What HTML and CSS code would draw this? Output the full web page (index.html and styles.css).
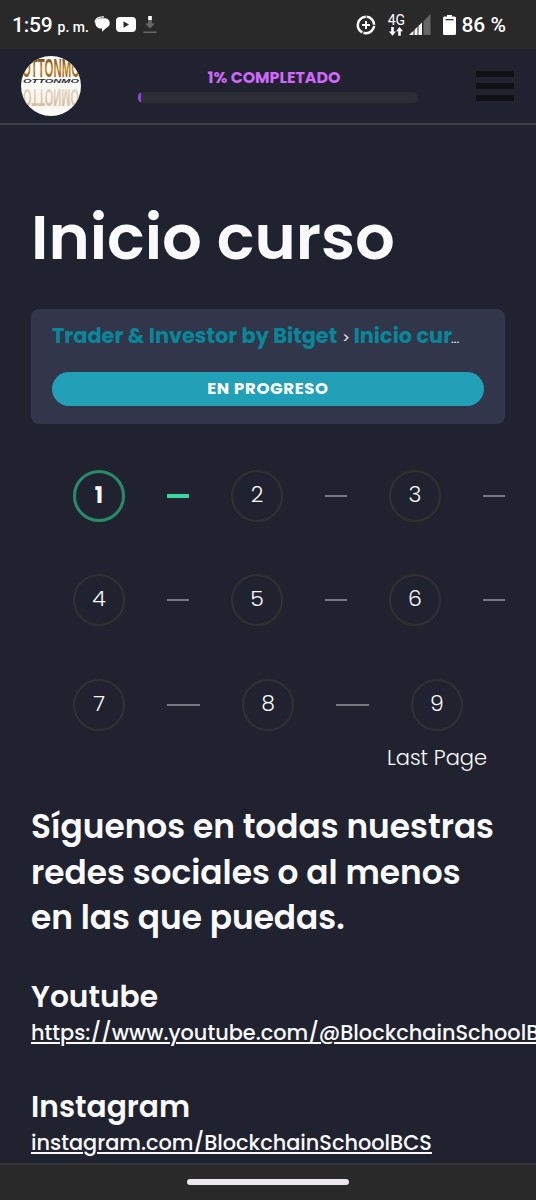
FILE: index.html
```html
<!DOCTYPE html>
<html lang="es">
<head>
<meta charset="utf-8">
<title>Inicio curso</title>
<link rel="stylesheet" href="styles.css">
</head>
<body>
<div class="statusbar">
  <span class="clock">1:59</span><span class="ampm">p. m.</span>
  <svg class="ic-chat" width="17" height="17" viewBox="0 0 17 17"><path d="M6 2.200h5.500a5 5 0 0 1 1 9.600l-4.500 4v-3.300H7a5 5 0 0 1-1-10.300z" fill="#fff"/><path d="M1 6.500C1.500 2 5 .7 10 .9" fill="none" stroke="#fff" stroke-width="1.300"/></svg>
  <svg class="ic-video" width="20" height="15" viewBox="0 0 20 15"><rect width="20" height="15" rx="4" fill="#fff"/><path d="M7.500 4.200v6.600l5.500-3.300z" fill="#292929"/></svg>
  <svg class="ic-down" width="14" height="19" viewBox="0 0 14 19"><path d="M5.200 5h3.600v3.500H12l-5 5-5-5h3.200z" fill="#666"/><rect x="5.200" y="1" width="3.600" height="4" fill="#fff"/><rect x=".5" y="16.500" width="13" height="1.600" fill="#666"/></svg>
  <span class="spacer"></span>
  <svg class="ic-data" width="20" height="20" viewBox="0 0 20 20"><circle cx="10" cy="10" r="8.200" fill="none" stroke="#fff" stroke-width="2.500" stroke-dasharray="11.900 1.200 14.500 1.200 21.500 1.200" transform="rotate(-86 10 10)"/><path d="M10 6v8M6 10h8" stroke="#fff" stroke-width="1.900"/></svg>
  <span class="net"><span class="net-label">4G</span>
    <svg width="14" height="9" viewBox="0 0 14 9"><path d="M2.200 0h2.600v4.500H7L3.500 8.800 0 4.500h2.200zM9.200 8.800h2.600V4.300H14L10.500 0 7 4.300h2.200z" fill="#fff"/></svg>
  </span>
  <svg class="ic-signal" width="22" height="22" viewBox="0 0 22 22"><path d="M14.500 7.200 21.500 0v21h-7z" fill="#666"/><path d="M0 21 13 8.500V21z" fill="#fff"/><path d="M5 14v8M9 10v12M13.500 7v15" stroke="#292929" stroke-width="1"/></svg>
  <svg class="ic-batt" width="13" height="20" viewBox="0 0 13 20"><path d="M4 0h5v1.500h2.500A1.500 1.500 0 0 1 13 3v15.500a1.500 1.500 0 0 1-1.500 1.500h-10A1.500 1.500 0 0 1 0 18.500V3a1.500 1.500 0 0 1 1.500-1.500H4z" fill="#fff"/><rect x="2.500" y="4" width="8" height="1.300" fill="#333"/></svg>
  <span class="pct">86 %</span>
</div>
<header class="topbar">
  <svg class="avatar" width="60" height="60" viewBox="0 0 60 60">
    <defs>
      <clipPath id="round"><circle cx="30" cy="30" r="30"/></clipPath>
      <linearGradient id="paper" x1="0" y1="0" x2="0" y2="1"><stop offset="0" stop-color="#fff"/><stop offset=".45" stop-color="#fdfbf7"/><stop offset=".8" stop-color="#f9f4ea"/><stop offset="1" stop-color="#fff"/></linearGradient>
      <linearGradient id="gold" x1="0" y1="0" x2="0" y2="1"><stop offset="0" stop-color="#5d3510"/><stop offset=".55" stop-color="#c98a2c"/><stop offset="1" stop-color="#7a4716"/></linearGradient>
      <linearGradient id="fade" x1="0" y1="0" x2="0" y2="1"><stop offset="0" stop-color="#cdb89f"/><stop offset="1" stop-color="#e6dccd"/></linearGradient>
    </defs>
    <g clip-path="url(#round)">
      <rect width="60" height="60" fill="url(#paper)"/>
      <text class="logo" transform="translate(1 21) scale(1 1.700)" textLength="58" lengthAdjust="spacingAndGlyphs" font-size="15" fill="url(#gold)">OTTONMO</text>
      <text class="logo slim" x="2" y="27" textLength="56" lengthAdjust="spacingAndGlyphs" font-size="6" fill="#2b2f33">OTTONMO</text>
      <text class="logo" transform="translate(2 33) scale(1 -1.750)" textLength="56" lengthAdjust="spacingAndGlyphs" font-size="14" fill="url(#fade)">OTTONMO</text>
    </g>
  </svg>
  <div class="progress">
    <div class="progress-label">1% COMPLETADO</div>
    <div class="track"><div class="fill" style="width:1%"></div></div>
  </div>
  <div class="burger"><i></i><i></i><i></i></div>
</header>
<main>
  <h1>Inicio curso</h1>
  <section class="card">
    <div class="crumbs"><a>Trader &amp; Investor by Bitget</a><span class="sep">&gt;</span><a>Inicio cur</a><span class="dots">...</span></div>
    <div class="status">EN PROGRESO</div>
  </section>
  <nav class="pager">
    <div class="row"><span class="dot on">1</span><i class="line on"></i><span class="dot">2</span><i class="line"></i><span class="dot">3</span><i class="line"></i></div>
    <div class="row"><span class="dot">4</span><i class="line"></i><span class="dot">5</span><i class="line"></i><span class="dot">6</span><i class="line"></i></div>
    <div class="row"><span class="dot">7</span><i class="line"></i><span class="dot">8</span><i class="line"></i><span class="dot">9</span></div>
    <div class="last">Last Page</div>
  </nav>
  <h2><span>Síguenos en todas nuestras</span><span>redes sociales o al menos</span><span>en las que puedas.</span></h2>
  <section class="social"><h3>Youtube</h3><a>https://www.youtube.com/@BlockchainSchoolBCS</a></section>
  <section class="social"><h3>Instagram</h3><a>instagram.com/BlockchainSchoolBCS</a></section>
</main>
<footer class="gesture"><div></div></footer>
</body>
</html>
```
FILE: styles.css
```css
* { box-sizing: border-box; }
body {
  margin: 0; width: 536px; height: 1200px; overflow: hidden;
  display: flex; flex-direction: column;
  background: #20232f; color: #fafafd;
  font-family: Poppins, Inter, "Open Sans", sans-serif;
  white-space: nowrap;
}
.statusbar {
  height: 49px; flex: none; background: #292929; color: #fff;
  display: flex; align-items: center; padding: 0 30px 0 12px;
  font-family: Roboto, sans-serif; font-weight: 500;
}
.clock { font-size: 21px; letter-spacing: -.2px; }
.ampm { font-size: 14px; margin: 5px 0 0 5px; }
.ic-chat { margin-left: 5px; }
.ic-video { margin-left: 5px; }
.ic-down { margin-left: 7px; }
.spacer { flex: 1; }
.net { display: flex; flex-direction: column; align-items: center; margin-left: 11px; width: 18px; }
.net-label { font-size: 14px; line-height: 13px; font-weight: 400; }
.ic-signal { margin-left: 4px; }
.ic-batt { margin-left: 12px; margin-top: 1px; }
.pct { font-size: 21px; margin-left: 5px; }
.topbar {
  height: 76px; flex: none; border-bottom: 2px solid #3b3e47;
  display: flex; padding: 7px 22px 0 21px; align-items: flex-start;
}
.avatar { flex: none; }
.logo { font-family: "Liberation Sans", sans-serif; font-weight: 700; }
.slim { font-style: italic; }
.progress { width: 280px; margin: 12px 0 0 57px; }
.progress-label { text-align: center; color: #cf68fb; font-size: 15.800px; line-height: 20px; font-weight: 700; padding-right: 8px; }
.track { height: 11px; margin-top: 4px; border-radius: 5px; background: #2c2e35; overflow: hidden; }
.fill { height: 100%; background: #9644dd; }
.burger { margin: 15px 0 0 58px; display: flex; flex-direction: column; gap: 6px; }
.burger i { width: 38px; height: 6px; background: #101114; }
main { flex: 1; min-height: 0; padding: 0 31px; overflow: hidden; }
h1 { margin: 66px 0 0; height: 118px; line-height: 92px; font-size: 62.500px; font-weight: 600; }
.card { height: 115px; border-radius: 8px; background: #31364a; padding: 10px 21px 0; }
.crumbs { height: 53px; line-height: 34px; font-size: 20.850px; }
.crumbs a { color: #09879a; font-weight: 700; }
.sep { font-size: 14px; margin: 0 4px 0 5px; }
.dots { font-size: 13px; margin-left: -1px; }
.status { height: 34px; border-radius: 17px; background: #21a0b8; color: #fff; line-height: 33px; text-align: center; font-size: 16.500px; font-weight: 700; letter-spacing: .65px; }
.pager { padding-top: 45px; height: 379px; }
.row { display: flex; align-items: center; height: 53px; margin-bottom: 51.500px; }
.dot { width: 52px; height: 52px; flex: none; margin: 0 42px; border: 2px solid #303136; border-radius: 50%; font-size: 22px; font-weight: 300; line-height: 46px; text-align: center; }
.dot.on { border: 3px solid #278a6c; line-height: 45px; font-weight: 700; }
.line { flex: 1; height: 2px; background: #777982; }
.line.on { height: 4px; background: #36d9a5; }
.last { width: 136px; margin: -40.500px 0 0 338px; text-align: center; font-size: 21px; font-weight: 300; line-height: 32px; }
h2 { margin: 0; padding-top: 1px; font-size: 32.800px; line-height: 45.700px; font-weight: 600; }
h2 span { display: block; }
.social { height: 110px; }
h3 { margin: 0; font-size: 29.700px; line-height: 40px; font-weight: 600; }
h2 + .social { margin-top: 36px; }
.social a { display: block; font-size: 20.850px; line-height: 32px; font-weight: 500; text-decoration: underline; text-decoration-thickness: 1.500px; text-underline-offset: 2px; }
.gesture { height: 37px; flex: none; background: #292929; border-top: 2px solid #34343a; display: flex; justify-content: center; align-items: center; padding-bottom: 2px; }
.gesture div { width: 162px; height: 6px; border-radius: 3px; background: #ece8ec; }
```
